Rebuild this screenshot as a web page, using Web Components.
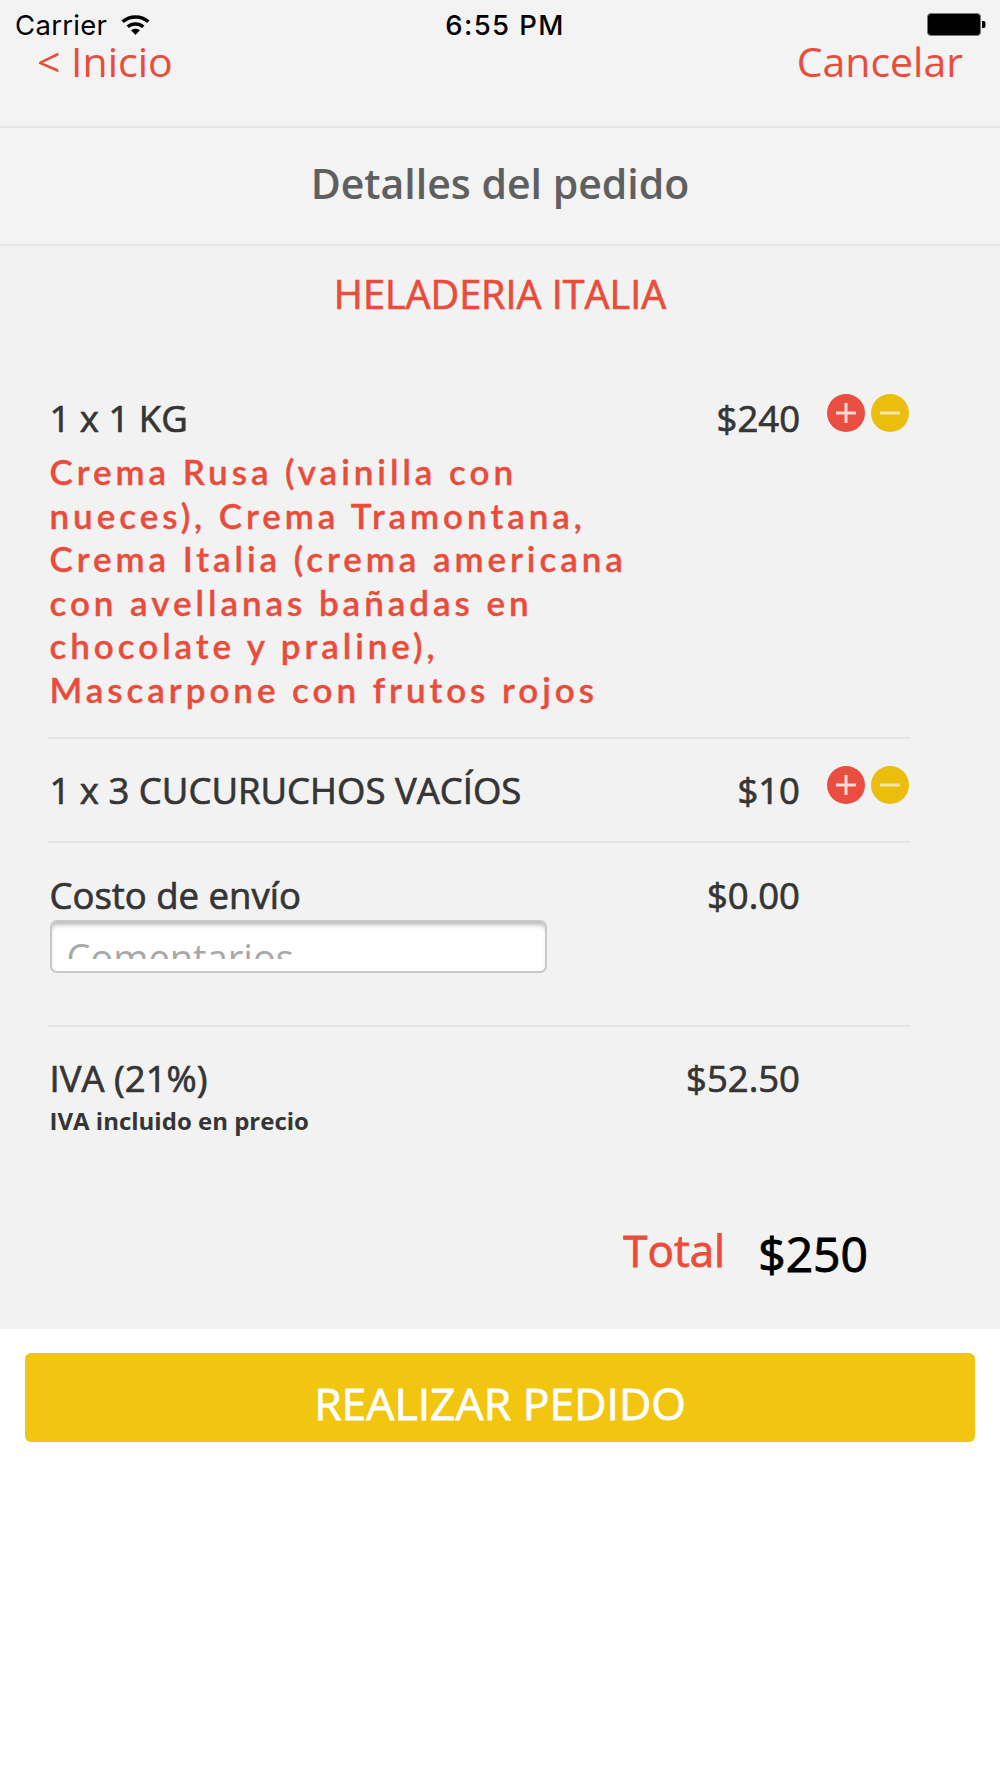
<!DOCTYPE html>
<html lang="es"><head><meta charset="utf-8"><title>Detalles del pedido</title>
<style>
html,body{margin:0;padding:0;background:#fff}
body{width:1000px;height:1778px;overflow:hidden;font-family:"Open Sans",sans-serif}
</style></head><body>
<order-screen></order-screen>
<script>
const sh=(el,html)=>{el.attachShadow({mode:'open'}).innerHTML=html;};
class StatusBar extends HTMLElement{connectedCallback(){sh(this,`<style>
:host{display:grid;grid-template-columns:1fr auto 1fr;align-items:center;height:50px;box-sizing:border-box;padding:0 13px 1px 15px;font:27.5px/30px "Inter","Liberation Sans",sans-serif;color:#000;background:#f3f3f3}
.l{display:flex;align-items:center;gap:13px;letter-spacing:.3px}.t{font-weight:500;letter-spacing:1.4px;margin-left:8px}
.r{display:flex;justify-content:flex-end}
svg{display:block}
</style><div class="l"><span>Carrier</span><svg width="31" height="23" viewBox="0 0 30 23"><path d="M1 7.6C8.5 .4 21.5 .4 29 7.6l-2.3 2.5C20.4 4.4 9.6 4.4 3.3 10.1Z M6 12.6c5-4.6 13-4.6 18 0l-2.4 2.5c-3.8-3.3-9.4-3.3-13.2 0Z M10.6 17.2c2.6-2 6.2-2 8.8 0L15 22Z" fill="#000"/></svg></div>
<div class="t">6:55 PM</div>
<div class="r"><svg width="60" height="25" viewBox="0 0 60 25"><rect x=".5" y="1.5" width="53" height="22" rx="3.5" fill="#000" stroke="#777"/><path d="M55 9h1.5a2 2 0 0 1 2 2v3a2 2 0 0 1-2 2H55Z" fill="#000"/></svg></div>`)}}
class NavBar extends HTMLElement{connectedCallback(){sh(this,`<style>
:host{display:flex;justify-content:space-between;align-items:flex-start;height:78px;box-sizing:border-box;padding:0 37px;background:#f3f3f3;border-bottom:2px solid #e6e6e6;color:#ea4c3c;font:41px/22px "Open Sans",sans-serif}
</style><span><slot name="left"></slot></span><span><slot name="right"></slot></span>`)}}
class TitleBar extends HTMLElement{connectedCallback(){sh(this,`<style>
:host{display:flex;align-items:center;justify-content:center;height:118px;box-sizing:border-box;padding-bottom:6px;background:#f3f3f3;border-bottom:2px solid #e6e6e6;color:#5f5f5f;font:600 41px/50px "Open Sans",sans-serif}
</style><slot></slot>`)}}
class ShopName extends HTMLElement{connectedCallback(){sh(this,`<style>
:host{display:block;text-align:center;color:#ea4c3c;font:39.5px/50px "Open Sans",sans-serif;-webkit-text-stroke:.7px #ea4c3c;padding-top:23px}
</style><slot></slot>`)}}
class StepBtn extends HTMLElement{connectedCallback(){const m=this.getAttribute('kind')==='minus';sh(this,`<style>
:host{display:block;width:38px;height:38px}svg{display:block}</style>
<svg width="38" height="38" viewBox="0 0 38 38"><circle cx="19" cy="19" r="19" fill="${m?'#ebbd0c':'#e94e40'}"/><path d="${m?'M9 19h20':'M19 9v20M9 19h20'}" stroke="${m?'#f6e6a4':'#f8d9d5'}" stroke-width="3"/></svg>`)}}
class OrderRow extends HTMLElement{connectedCallback(){const s=this.hasAttribute('steps');sh(this,`<style>
:host{display:grid;grid-template-columns:1fr auto 110px;box-sizing:border-box;width:862px;margin-left:48px;padding-left:1.5px;color:#353535;font:36.5px/46px "Open Sans",sans-serif;-webkit-text-stroke:.7px #353535}
:host([line]){border-bottom:2px solid #e6e6e6}
.steps{display:flex;gap:6px;padding-left:27px;margin-top:-1px}
</style><div class="m"><slot></slot></div><div class="p"><slot name="price"></slot></div><div class="steps">${s?'<step-btn></step-btn><step-btn kind="minus"></step-btn>':''}</div>`)}}
class OrderScreen extends HTMLElement{connectedCallback(){sh(this,`<style>
:host{display:block}
.panel{background:#f2f2f2;height:1329px;overflow:hidden}
.flavors{font:600 35px/43.5px "Lato",sans-serif;letter-spacing:3.95px;color:#ea4c3c;margin-top:9px;width:590px;-webkit-text-stroke:.35px #ea4c3c}
.small{font:700 24px/32px "Open Sans",sans-serif;color:#353535;margin-top:4px;-webkit-text-stroke:0}
.input{box-sizing:border-box;width:497px;height:53px;margin-top:2px;background:#fff;border:2px solid #c9c9c9;border-radius:7px;box-shadow:inset 0 5px 4px -2px #bbb;overflow:hidden;padding:13px 15px 0;-webkit-text-stroke:0}
.input div{height:24px;overflow:hidden;font:38px/44px "Open Sans",sans-serif;color:#a8a8a8;white-space:nowrap}
.total{display:flex;justify-content:flex-end;align-items:flex-start;gap:33px;padding:83px 132px 0 0}
.total b{font:400 44px/60px "Open Sans",sans-serif;color:#ea4c3c;-webkit-text-stroke:.8px #ea4c3c}
.total i{font:400 48px/60px "Open Sans",sans-serif;font-style:normal;color:#000;margin-top:4px;-webkit-text-stroke:1px #000}
.btn{display:flex;align-items:center;justify-content:center;box-sizing:border-box;margin:24px 25px 0;height:89px;background:#f2c511;border-radius:6px;color:#fff;font:400 44.5px/50px "Open Sans",sans-serif;-webkit-text-stroke:.8px #fff;padding-top:10px}
</style>
<div class="panel">
<status-bar></status-bar>
<nav-bar><span slot="left">&lt; Inicio</span><span slot="right">Cancelar</span></nav-bar>
<title-bar>Detalles del pedido</title-bar>
<shop-name>HELADERIA ITALIA</shop-name>
<order-row steps line style="padding-top:76px;padding-bottom:25.5px">1 x 1 KG<div class="flavors">Crema Rusa (vainilla con nueces), Crema Tramontana, Crema Italia (crema americana con avellanas bañadas en chocolate y praline), Mascarpone con frutos rojos</div><span slot="price">$240</span></order-row>
<order-row steps line style="padding-top:28px;padding-bottom:28px">1 x 3 CUCURUCHOS VACÍOS<span slot="price">$10</span></order-row>
<order-row line style="padding-top:29px;height:184px">Costo de envío<div class="input"><div>Comentarios</div></div><span slot="price">$0.00</span></order-row>
<order-row style="padding-top:28px">IVA (21%)<div class="small">IVA incluido en precio</div><span slot="price">$52.50</span></order-row>
<div class="total"><b>Total</b><i>$250</i></div>
</div>
<div class="btn">REALIZAR PEDIDO</div>`)}}
[['status-bar',StatusBar],['nav-bar',NavBar],['title-bar',TitleBar],['shop-name',ShopName],['step-btn',StepBtn],['order-row',OrderRow],['order-screen',OrderScreen]].forEach(([n,c])=>customElements.define(n,c));
</script></body></html>
